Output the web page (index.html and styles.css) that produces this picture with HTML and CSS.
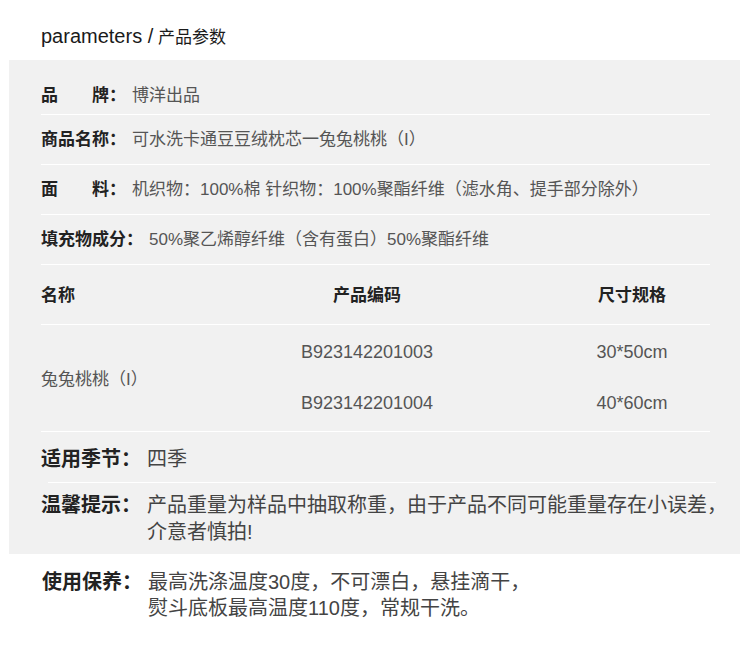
FILE: index.html
```html
<!DOCTYPE html>
<html lang="zh-CN">
<head>
    <meta charset="UTF-8">
    <meta name="viewport" content="width=device-width, initial-scale=1.0">
    <title>产品参数</title>
    <link rel="stylesheet" href="styles.css">
</head>
<body>
    <div class="page">
        <div class="title"><span class="title-en">parameters /</span> 产品参数</div>

        <div class="panel">
            <div class="spec spec-first">
                <div class="spec-label">品　　牌：</div>
                <div class="spec-value">博洋出品</div>
            </div>
            <div class="rule"></div>
            <div class="spec">
                <div class="spec-label">商品名称：</div>
                <div class="spec-value">可水洗卡通豆豆绒枕芯一兔兔桃桃（I）</div>
            </div>
            <div class="rule"></div>
            <div class="spec">
                <div class="spec-label">面　　料：</div>
                <div class="spec-value">机织物：100%棉 针织物：100%聚酯纤维（滤水角、提手部分除外）</div>
            </div>
            <div class="rule"></div>
            <div class="spec">
                <div class="spec-label">填充物成分：</div>
                <div class="spec-value">50%聚乙烯醇纤维（含有蛋白）50%聚酯纤维</div>
            </div>
            <div class="rule"></div>

            <div class="size-table">
                <div class="size-head">
                    <div>名称</div>
                    <div class="cell-center">产品编码</div>
                    <div class="cell-center">尺寸规格</div>
                </div>
                <div class="rule"></div>
                <div class="size-body">
                    <div class="size-name">兔兔桃桃（I）</div>
                    <div class="size-cell cell-center">B923142201003</div>
                    <div class="size-cell cell-center">30*50cm</div>
                    <div class="size-cell cell-center">B923142201004</div>
                    <div class="size-cell cell-center">40*60cm</div>
                </div>
                <div class="rule"></div>
            </div>

            <div class="note note-season">
                <div class="note-label">适用季节：</div>
                <div class="note-value">四季</div>
            </div>
            <div class="rule rule-shift"></div>
            <div class="note note-tip">
                <div class="note-label">温馨提示：</div>
                <div class="note-value">产品重量为样品中抽取称重，由于产品不同可能重量存在小误差，<br>介意者慎拍!</div>
            </div>
        </div>

        <div class="note note-care">
            <div class="note-label">使用保养：</div>
            <div class="note-value">最高洗涤温度30度，不可漂白，悬挂滴干，<br>熨斗底板最高温度110度，常规干洗。</div>
        </div>
    </div>
</body>
</html>
```

FILE: styles.css
```css
body {
    margin: 0;
    background-color: #fff;
    font-family: "Liberation Sans", "Noto Sans CJK SC", sans-serif;
    color: #222;
}
.page {
    width: 750px;
}
.title {
    padding: 24px 0 0 41px;
    font-size: 17px;
    line-height: 24px;
    color: #1a1a1a;
}
.title-en {
    font-size: 20px;
}
.panel {
    margin: 10px 10px 0 9px;
    padding: 0 30px 8px 32px;
    background-color: #f1f1f1;
}
.rule {
    height: 1px;
    background-color: #fff;
}
.rule-shift {
    margin: 0 -6px 0 7px;
}
.spec {
    display: flex;
    padding: 13px 0 12px;
    font-size: 17px;
    line-height: 24px;
    white-space: nowrap;
}
.spec-first {
    padding: 24px 0 6px;
}
.spec-label {
    flex: none;
    margin-right: 6px;
    font-weight: bold;
    color: #222;
}
.spec-value {
    color: #555;
}
.size-head, .size-body {
    display: grid;
    grid-template-columns: 139px 374px 1fr;
}
.size-head {
    padding: 19px 0 16px;
    font-size: 17px;
    line-height: 24px;
    font-weight: bold;
    color: #222;
}
.size-body {
    padding: 15px 0 16px;
    row-gap: 27px;
}
.cell-center {
    text-align: center;
}
.size-name {
    grid-row: span 2;
    align-self: center;
    font-size: 17px;
    color: #555;
}
.size-cell {
    font-size: 18px;
    line-height: 24px;
    color: #555;
}
.note {
    display: flex;
    font-size: 20px;
    white-space: nowrap;
}
.note-label {
    flex: none;
    margin-right: 6px;
    font-weight: bold;
    color: #222;
}
.note-value {
    color: #444;
}
.note-season {
    padding: 15px 0 11px;
    line-height: 24px;
}
.note-tip {
    padding: 9px 0 0;
    line-height: 27px;
}
.note-care {
    padding: 15px 0 0 42px;
    line-height: 26px;
}
```
